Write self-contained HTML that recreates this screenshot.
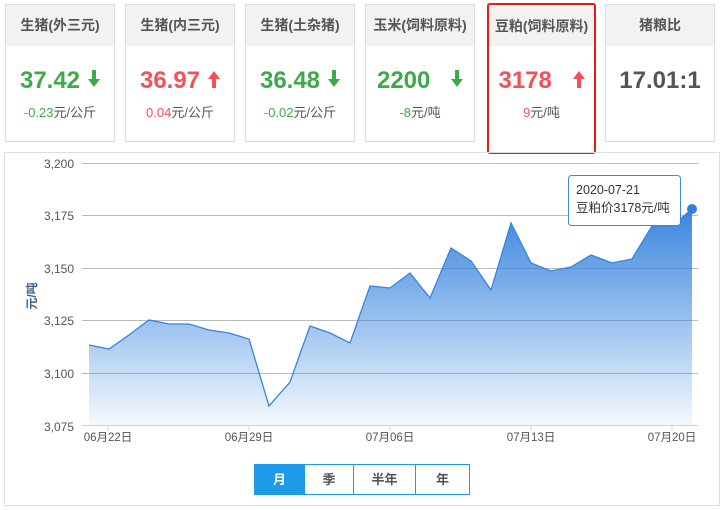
<!DOCTYPE html>
<html><head><meta charset="utf-8"><style>
*{margin:0;padding:0;box-sizing:border-box}
body{width:725px;height:510px;background:#fff;font-family:"Liberation Sans","Noto Sans CJK SC",sans-serif;position:relative;overflow:hidden}
.card{position:absolute;top:4px;width:110px;height:138px;border:1px solid #ddd;background:#fff;text-align:center}
.card .h{height:41px;background:#f2f2f2;line-height:41px;font-size:14px;font-weight:bold;color:#555}
.card .v{margin-top:20px;font-size:24px;font-weight:bold;line-height:30px}
.card .s{margin-top:6px;font-size:13px;color:#555}
.g{color:#3daa4a}.r{color:#f5505a}
.arr{margin-left:8px;display:inline-block;vertical-align:middle;position:relative;top:-3px}
.red{border:2px solid #e51c1c;border-radius:3px}
.box{position:absolute;left:4px;top:152px;width:716px;height:354px;border:1px solid #ddd}
.btns{position:absolute;left:254px;top:464px;display:flex;border:1px solid #1e9be8;height:31px}
.btns div{width:49px;text-align:center;line-height:29px;font-size:13px;font-weight:bold;color:#555;border-left:1px solid #1e9be8}
.btns div:first-child{border-left:none;background:#1e9be8;color:#fff}
</style></head><body>
<div class="card" style="left:5px"><div class="h">生猪(外三元)</div><div class="v g">37.42<svg class="arr" width="12" height="18"><rect x="4" y="0" width="4" height="10" fill="#3daa4a"/><path d="M0,9H12L6,17Z" fill="#3daa4a"/></svg></div><div class="s"><span class="g">-0.23</span>元/公斤</div></div>
<div class="card" style="left:125px"><div class="h">生猪(内三元)</div><div class="v r">36.97<svg class="arr" width="12" height="18"><rect x="4" y="8" width="4" height="10" fill="#f5505a"/><path d="M0,9H12L6,1Z" fill="#f5505a"/></svg></div><div class="s"><span class="r">0.04</span>元/公斤</div></div>
<div class="card" style="left:245px"><div class="h">生猪(土杂猪)</div><div class="v g">36.48<svg class="arr" width="12" height="18"><rect x="4" y="0" width="4" height="10" fill="#3daa4a"/><path d="M0,9H12L6,17Z" fill="#3daa4a"/></svg></div><div class="s"><span class="g">-0.02</span>元/公斤</div></div>
<div class="card" style="left:365px"><div class="h">玉米(饲料原料)</div><div class="v g">2200 <svg class="arr" style="margin-left:14px" width="12" height="18"><rect x="4" y="0" width="4" height="10" fill="#3daa4a"/><path d="M0,9H12L6,17Z" fill="#3daa4a"/></svg></div><div class="s"><span class="g">-8</span>元/吨</div></div>
<div class="card red" style="left:487px;top:3px;width:109px;height:151px"><div class="h" style="margin-top:1px;height:40px;line-height:40px">豆粕(饲料原料)</div><div class="v r">3178 <svg class="arr" style="margin-left:14px" width="12" height="18"><rect x="4" y="8" width="4" height="10" fill="#f5505a"/><path d="M0,9H12L6,1Z" fill="#f5505a"/></svg></div><div class="s"><span class="r">9</span>元/吨</div></div>
<div class="card" style="left:605px"><div class="h">猪粮比</div><div class="v" style="color:#555">17.01:1</div></div>
<div class="box"></div>
<svg width="725" height="510" style="position:absolute;left:0;top:0">
<defs><linearGradient id="gr" x1="0" y1="0" x2="0" y2="1"><stop offset="0" stop-color="#2f7fdc" stop-opacity="0.95"/><stop offset="1" stop-color="#2f7fdc" stop-opacity="0.05"/></linearGradient></defs>
<g stroke="#bbb" stroke-width="1">
<line x1="82" y1="163.5" x2="698" y2="163.5"/><line x1="82" y1="215.5" x2="698" y2="215.5"/><line x1="82" y1="268.5" x2="698" y2="268.5"/><line x1="82" y1="320.5" x2="698" y2="320.5"/><line x1="82" y1="373.5" x2="698" y2="373.5"/></g>
<g font-size="12" fill="#555" text-anchor="end"><text x="74" y="168">3,200</text><text x="74" y="220">3,175</text><text x="74" y="273">3,150</text><text x="74" y="325">3,125</text><text x="74" y="378">3,100</text><text x="74" y="431">3,075</text></g>
<text x="36" y="296" font-size="12" fill="#3b5f8a" transform="rotate(-90 36 296)" text-anchor="middle" font-weight="bold">元/吨</text>
<path d="M89,345 L109,349 L129,335 L149,320 L169,324 L189,324 L209,330 L229,333 L249,339 L269,406 L290,382 L310,326 L330,333 L350,343 L370,286 L390,288 L410,273 L430,298 L451,248 L471,261 L491,290 L511,223 L531,263 L551,271 L571,267 L591,255 L612,263 L632,259 L652,226 L672,226 L692,209 L692,425 L89,425Z" fill="url(#gr)"/>
<path d="M89,345 L109,349 L129,335 L149,320 L169,324 L189,324 L209,330 L229,333 L249,339 L269,406 L290,382 L310,326 L330,333 L350,343 L370,286 L390,288 L410,273 L430,298 L451,248 L471,261 L491,290 L511,223 L531,263 L551,271 L571,267 L591,255 L612,263 L632,259 L652,226 L672,226 L692,209" fill="none" stroke="#3a84dd" stroke-width="1.3"/>
<line x1="82" y1="425.5" x2="698" y2="425.5" stroke="#c8d4e4"/>
<g stroke="#c8d4e4"><line x1="108" y1="426" x2="108" y2="431"/><line x1="249" y1="426" x2="249" y2="431"/><line x1="390" y1="426" x2="390" y2="431"/><line x1="531" y1="426" x2="531" y2="431"/><line x1="672" y1="426" x2="672" y2="431"/></g>
<g font-size="11.5" fill="#555" text-anchor="middle"><text x="108" y="441">06月22日</text><text x="249" y="441">06月29日</text><text x="390" y="441">07月06日</text><text x="531" y="441">07月13日</text><text x="672" y="441">07月20日</text></g>
<circle cx="692" cy="209" r="5" fill="#2f7fdc"/>
<rect x="568.5" y="175.5" width="112" height="50" rx="3" fill="#fff" stroke="#3a84dd" opacity="0.97"/>
<text x="576" y="194" font-size="12.5" fill="#333">2020-07-21</text>
<text x="576" y="212" font-size="12.5" fill="#333">豆粕价3178元/吨</text>
</svg>
<div class="btns"><div>月</div><div>季</div><div style="width:62px">半年</div><div style="width:54px">年</div></div>
</body></html>
